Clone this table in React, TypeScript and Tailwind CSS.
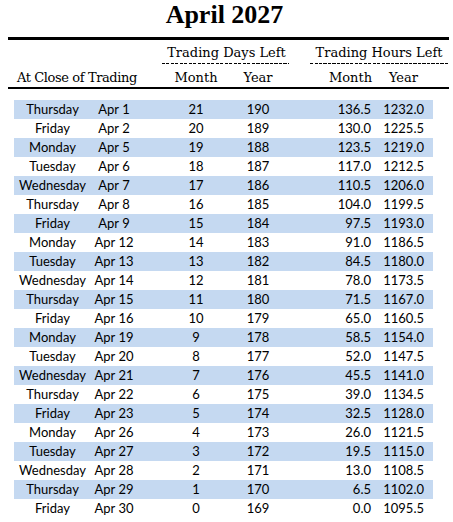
const days = [
  ["Thursday", 1], ["Friday", 2], ["Monday", 5], ["Tuesday", 6], ["Wednesday", 7],
  ["Thursday", 8], ["Friday", 9], ["Monday", 12], ["Tuesday", 13], ["Wednesday", 14],
  ["Thursday", 15], ["Friday", 16], ["Monday", 19], ["Tuesday", 20], ["Wednesday", 21],
  ["Thursday", 22], ["Friday", 23], ["Monday", 26], ["Tuesday", 27], ["Wednesday", 28],
  ["Thursday", 29], ["Friday", 30],
] as const

const rows = days.map(([name, date], i) => {
  const month = days.length - 1 - i
  const year = 190 - i
  return {
    name,
    date: `Apr ${date}`,
    month,
    year,
    hoursMonth: (month * 6.5).toFixed(1),
    hoursYear: (1232 - i * 6.5).toFixed(1),
  }
})

const serif = "font-['DejaVu_Serif',serif] text-[13px] leading-[15px]"
const dashes = "h-px bg-[repeating-linear-gradient(90deg,#000_0_3px,transparent_3px_4.5px)]"

export default function App() {
  return (
    <div className="w-[453px] bg-white text-black">
      {/* title */}
      <div className="h-[37px] flex justify-center">
        <h1 className="font-['Liberation_Serif',serif] font-bold text-[26px] leading-[29px] -ml-[4px]">
          April 2027
        </h1>
      </div>

      <div className="ml-[8px] w-[441px] h-[3px] bg-black" />

      {/* group headers */}
      <div className={`flex pt-[5px] ${serif}`}>
        <div className="ml-[162px] w-[127px]">
          <div className="text-center pl-[2px]">Trading Days Left</div>
          <div className={`mt-[3px] ${dashes}`} />
        </div>
        <div className="ml-[21px] w-[138px]">
          <div className="text-center">Trading Hours Left</div>
          <div className={`mt-[3px] ${dashes}`} />
        </div>
      </div>

      {/* column headers */}
      <div className={`flex mt-[6px] ${serif}`}>
        <div className="ml-[17px] w-[149px] tracking-[-0.4px]">At Close of Trading</div>
        <div className="w-[60px] text-center">Month</div>
        <div className="ml-[2px] w-[60px] text-center">Year</div>
        <div className="w-[84px] text-right">Month</div>
        <div className="w-[46px] text-right">Year</div>
      </div>

      <div className="ml-[8px] w-[441px] h-[2px] mt-[2px] bg-black" />

      {/* rows */}
      <div className="mt-[11px] ml-[14px] w-[419px] font-['Lato',sans-serif] text-[13px]">
        {rows.map((r, i) => (
          <div
            key={r.date}
            className={`flex h-[19px] items-center ${i % 2 === 0 ? "bg-[#c5d9f1]" : ""}`}
          >
            <div className="w-[77px] text-center">{r.name}</div>
            <div className="w-[46px] text-center">{r.date}</div>
            <div className="ml-[29px] w-[60px] text-center">{r.month}</div>
            <div className="ml-[2px] w-[60px] text-center">{r.year}</div>
            <div className="w-[83px] text-right">{r.hoursMonth}</div>
            <div className="w-[53px] text-right">{r.hoursYear}</div>
          </div>
        ))}
      </div>
    </div>
  )
}
